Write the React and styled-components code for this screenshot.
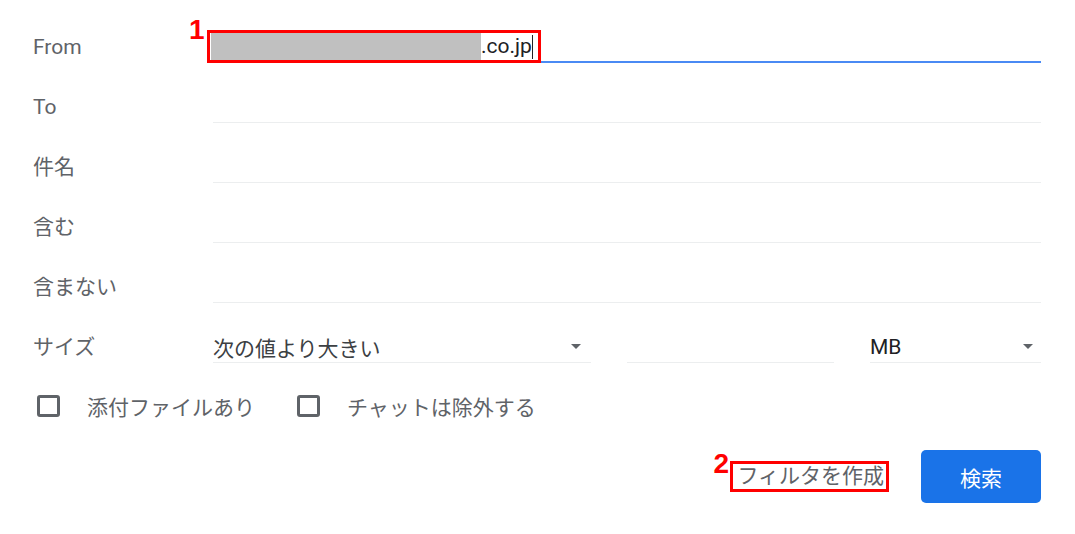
import React from "react";
import styled, { createGlobalStyle } from "styled-components";

const GlobalStyle = createGlobalStyle`
  html, body {
    margin: 0;
    padding: 0;
    background: #ffffff;
  }
  body {
    font-family: Roboto, "Noto Sans CJK JP", "Noto Sans", sans-serif;
  }
`;

const Form = styled.div`
  box-sizing: border-box;
  width: 1075px;
  padding: 3px 34px 0 33px;
`;

const Row = styled.div`
  display: grid;
  grid-template-columns: 180px 1fr;
  height: 60px;
  align-items: end;
`;

const Label = styled.div`
  font-size: 21px;
  line-height: 31px;
  height: 31px;
  color: #5f6368;
  white-space: nowrap;
`;

const Field = styled.div`
  box-sizing: border-box;
  height: 31px;
  display: flex;
  align-items: center;
  border-bottom: ${(p) => (p.$active ? "2px solid #4a8af4" : "1px solid #eceeef")};
  font-size: 21px;
  color: #202124;
`;

const Value = styled.span`
  position: relative;
  display: inline-flex;
  align-items: center;
  height: 31px;
`;

const Redacted = styled.span`
  display: inline-block;
  width: 270px;
  height: 27px;
  margin-left: -2px;
  background: #c0c0c0;
`;

const Domain = styled.span`
  font-size: 21px;
  line-height: 31px;
  color: #202124;
`;

const Caret = styled.span`
  display: inline-block;
  width: 1px;
  height: 24px;
  background: #202124;
`;

const RedBox = styled.span`
  position: absolute;
  top: ${(p) => p.$top}px;
  bottom: ${(p) => p.$bottom}px;
  left: ${(p) => p.$left}px;
  right: ${(p) => p.$right}px;
  border: 3px solid #ff0000;
  pointer-events: none;
`;

const Marker = styled.span`
  position: absolute;
  top: ${(p) => p.$top}px;
  left: ${(p) => p.$left}px;
  font-family: "Liberation Sans", Arial, sans-serif;
  font-weight: 700;
  font-size: 28px;
  line-height: 28px;
  color: #ff0000;
`;

const SizeFields = styled.div`
  display: flex;
  gap: 36px;
`;

const Select = styled.div`
  box-sizing: border-box;
  width: ${(p) => (p.$width ? `${p.$width}px` : "auto")};
  flex: ${(p) => (p.$width ? "none" : "1")};
  height: 31px;
  display: flex;
  align-items: center;
  justify-content: space-between;
  padding-right: ${(p) => p.$pr}px;
  border-bottom: 1px solid #eceeef;
  font-size: 21px;
  color: ${(p) => p.$color};
`;

const Arrow = styled.span`
  width: 0;
  height: 0;
  border-left: 5px solid transparent;
  border-right: 5px solid transparent;
  border-top: 5px solid #5f6368;
  margin-top: -1px;
`;

const NumberField = styled.div`
  box-sizing: border-box;
  width: 207px;
  height: 31px;
  border-bottom: 1px solid #eceeef;
`;

const CheckRow = styled.div`
  box-sizing: border-box;
  display: flex;
  align-items: flex-end;
  gap: 42px;
  height: 60px;
  padding: 0 0 2px 4px;
`;

const CheckItem = styled.label`
  display: flex;
  align-items: center;
  gap: 27px;
  height: 31px;
  font-size: 21px;
  color: #5f6368;
`;

const Box = styled.span`
  box-sizing: border-box;
  width: 23px;
  height: 22px;
  border: 3px solid #5f6368;
  border-radius: 3px;
`;

const Actions = styled.div`
  display: flex;
  justify-content: flex-end;
  align-items: center;
  gap: 37px;
  margin-top: 27px;
`;

const LinkText = styled.span`
  position: relative;
  font-size: 21px;
  line-height: 31px;
  color: #5f6368;
`;

const SearchButton = styled.button`
  width: 120px;
  height: 53px;
  border: none;
  border-radius: 5px;
  background: #1a73e8;
  color: #ffffff;
  font-family: Roboto, "Noto Sans CJK JP", sans-serif;
  font-size: 21px;
  padding: 0;
`;

export default function App() {
  return (
    <>
      <GlobalStyle />
      <Form>
        <Row>
          <Label>From</Label>
          <Field $active>
            <Value>
              <Redacted />
              <Domain>.co.jp</Domain>
              <Caret />
              <RedBox $top={-1} $bottom={-1} $left={-6} $right={-8} />
              <Marker $top={-15} $left={-24}>1</Marker>
            </Value>
          </Field>
        </Row>
        <Row>
          <Label>To</Label>
          <Field />
        </Row>
        <Row>
          <Label>件名</Label>
          <Field />
        </Row>
        <Row>
          <Label>含む</Label>
          <Field />
        </Row>
        <Row>
          <Label>含まない</Label>
          <Field />
        </Row>
        <Row>
          <Label>サイズ</Label>
          <SizeFields>
            <Select $width={378} $pr={10} $color="#3c4043">
              <span>次の値より大きい</span>
              <Arrow />
            </Select>
            <NumberField />
            <Select $pr={8} $color="#202124">
              <span>MB</span>
              <Arrow />
            </Select>
          </SizeFields>
        </Row>
        <CheckRow>
          <CheckItem>
            <Box />
            添付ファイルあり
          </CheckItem>
          <CheckItem>
            <Box />
            チャットは除外する
          </CheckItem>
        </CheckRow>
        <Actions>
          <LinkText>
            フィルタを作成
            <RedBox $top={0} $bottom={0} $left={-7} $right={-5} />
            <Marker $top={-11} $left={-24}>2</Marker>
          </LinkText>
          <SearchButton>検索</SearchButton>
        </Actions>
      </Form>
    </>
  );
}
